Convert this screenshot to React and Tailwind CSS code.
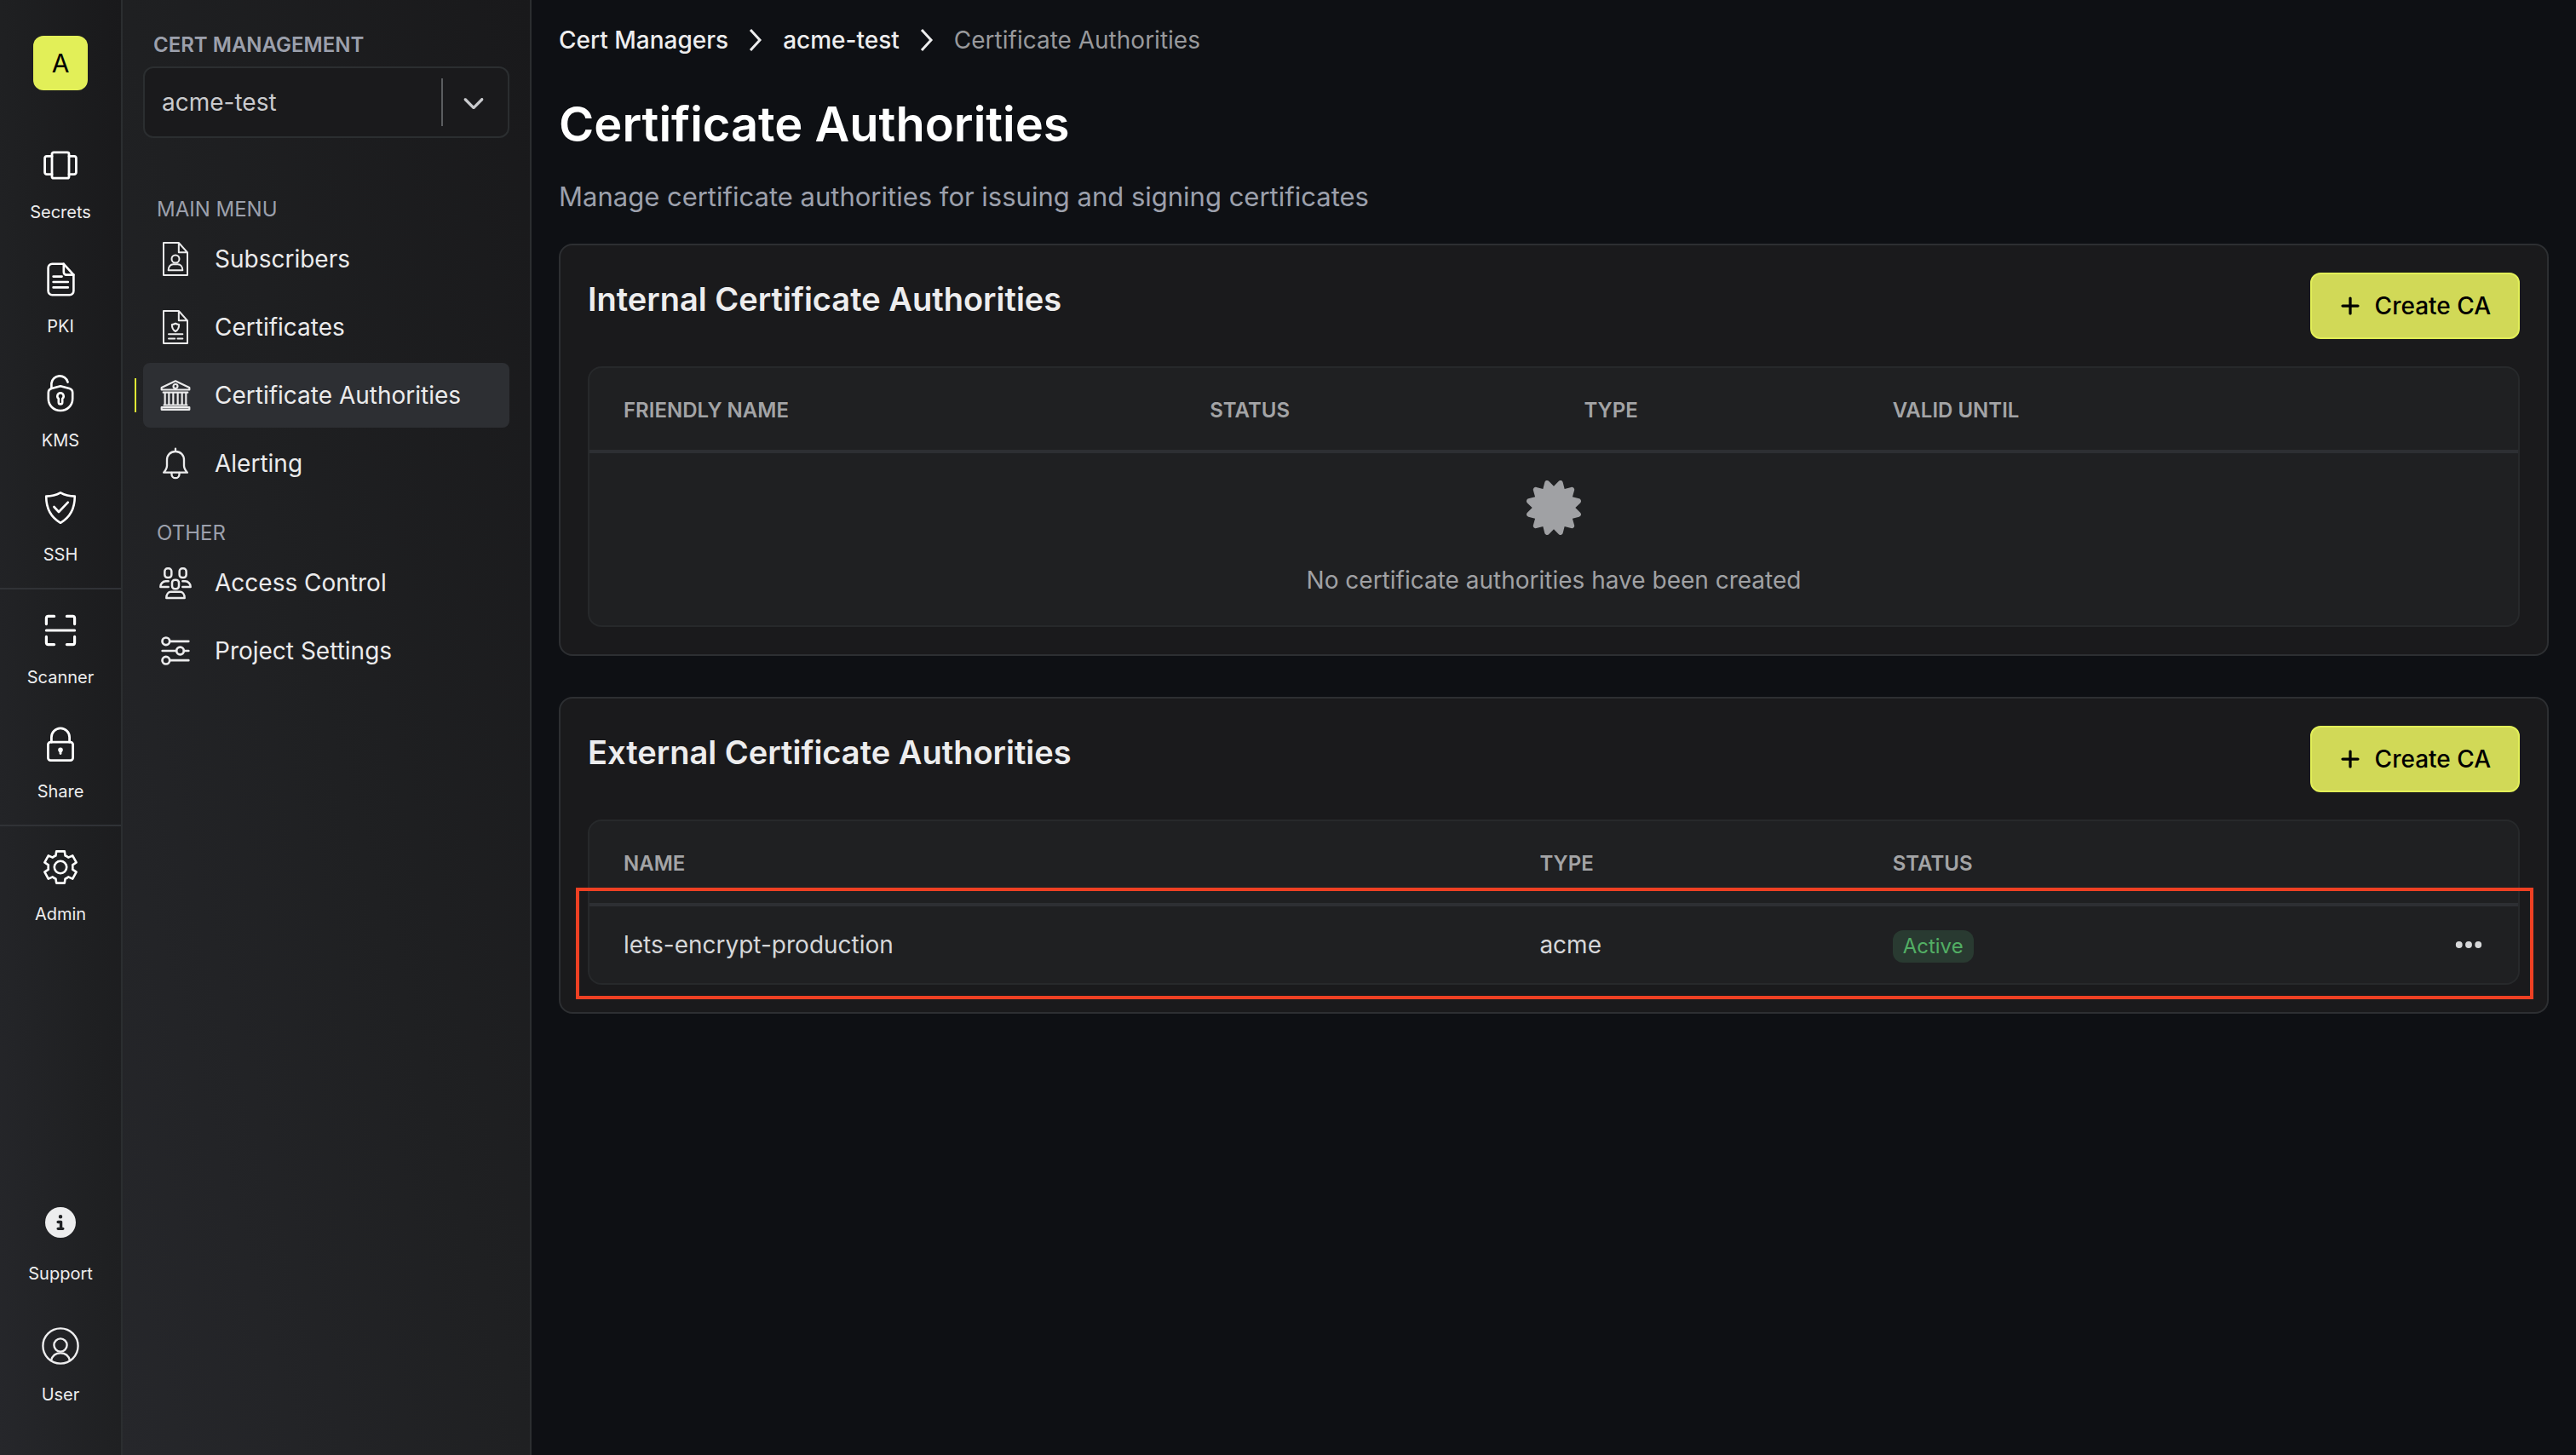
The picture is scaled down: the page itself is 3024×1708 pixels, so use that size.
import React, { useState } from "react";
import { FaChevronDown, FaCertificate, FaCircleInfo, FaEllipsis, FaPlus } from "react-icons/fa6";

// outline icons, all drawn on a 24px grid
function Icon({ name, className }) {
  const { width, shape } = ICONS[name];
  return (
    <svg
      viewBox="0 0 24 24"
      fill="none"
      stroke="currentColor"
      strokeWidth={width}
      strokeLinecap="round"
      strokeLinejoin="round"
      aria-hidden="true"
      className={className}
    >
      {shape}
    </svg>
  );
}

const ICONS = {
  secrets: {
    width: 1.4,
    shape: (
      <>
        <rect x="7" y="4.4" width="10" height="15.200" rx="1" />
        <path d="M7 6.700H4a1.200 1.200 0 0 0-1.200 1.200v8.200A1.200 1.200 0 0 0 4 17.300h3M17 6.700h3a1.200 1.200 0 0 1 1.200 1.200v8.200a1.200 1.200 0 0 1-1.200 1.200h-3" />
      </>
    ),
  },
  pki: {
    width: 1.3,
    shape: (
      <>
        <path d="M13.900 2.900H7.100a2.300 2.300 0 0 0-2.300 2.300v13.600a2.300 2.300 0 0 0 2.300 2.300h10.300a2.300 2.300 0 0 0 2.300-2.300V9.300z" />
        <path d="M13.900 2.900v4.900a1.500 1.500 0 0 0 1.500 1.500h4.300M7.800 10.300h5M7.800 13.500h8.600M7.800 16.700h8.600" />
      </>
    ),
  },
  kms: {
    width: 1.3,
    shape: (
      <>
        <path d="M12 7.600l5.200 1.400c1.200.4 1.900 1.200 1.900 2.500v3.500c0 4-3.100 7-7.100 7s-7.100-3-7.100-7v-3.500c0-1.300.7-2.100 1.900-2.500z" />
        <path d="M6.700 9V6a4.900 4.900 0 0 1 9.600-.7" />
        <path d="M12 11.600a1.900 1.900 0 0 0-1.100 3.400v2.100a1.100 1.100 0 0 0 2.200 0V15a1.900 1.900 0 0 0-1.100-3.400z" />
      </>
    ),
  },
  ssh: {
    width: 1.3,
    shape: (
      <>
        <path d="M12 3.200c2.500 1.400 5.200 2.100 8.400 2.100 0 7-2.400 12.200-8.400 15.600C6 17.500 3.600 12.300 3.600 5.300c3.200 0 5.900-.7 8.400-2.100z" />
        <path d="M8.200 11.500l2.800 3 5.400-5.700" />
      </>
    ),
  },
  scanner: {
    width: 1.6,
    shape: (
      <path d="M3.700 8.300V4.700a1 1 0 0 1 1-1H8.300M15.700 3.700h3.600a1 1 0 0 1 1 1v3.600M3.700 15.700v3.600a1 1 0 0 0 1 1h3.600M15.700 20.300h3.600a1 1 0 0 0 1-1v-3.600M3.700 12h16.600" />
    ),
  },
  share: {
    width: 1.4,
    shape: (
      <>
        <rect x="4.700" y="10.600" width="14.600" height="10.700" rx="1.500" />
        <path d="M6.700 10.600V7.700a5.300 5.300 0 0 1 10.600 0v2.900" />
        <circle cx="12" cy="15.100" r=".7" fill="currentColor" />
        <path d="M12 15.300v2" />
      </>
    ),
  },
  admin: {
    width: 1.3,
    shape: (
      <>
        <path d="M9.600 2.700h4.800l.4 2.600c.7.200 1.200.5 1.800 1l2.500-1.100 2.200 4-2.200 1.500c.1.900.1 1.700 0 2.600l2.200 1.500-2.200 4-2.500-1.100c-.6.500-1.100.8-1.800 1l-.4 2.600H9.600l-.4-2.600c-.7-.2-1.200-.5-1.800-1l-2.500 1.100-2.200-4 2.200-1.500c-.1-.9-.1-1.700 0-2.600L2.700 9.200l2.200-4 2.500 1.100c.6-.5 1.100-.8 1.800-1z" />
        <circle cx="12" cy="12" r="3.600" />
      </>
    ),
  },
  user: {
    width: 1.2,
    shape: (
      <>
        <circle cx="12" cy="12" r="10.300" />
        <circle cx="12" cy="11.500" r="3.800" />
        <path d="M6.500 20.500c.7-2.700 2.800-4.300 5.500-4.300s4.800 1.600 5.500 4.300" />
      </>
    ),
  },
  subscribers: {
    width: 1.2,
    shape: (
      <>
        <path d="M14.300.6H3.600v22.800h16.800V7.400zM14.300.6v6.800h6.100" />
        <circle cx="12" cy="12" r="2.700" />
        <path d="M7 20c0-2.600 1.500-4.300 3.400-4.300h3.200c1.900 0 3.400 1.700 3.400 4.300z" />
      </>
    ),
  },
  certificates: {
    width: 1.2,
    shape: (
      <>
        <path d="M14.300.6H3.600v22.800h16.800V7.400zM14.300.6v6.800h6.100" />
        <path d="M12 9.400c.8.600 1.600.8 2.500.8 0 2.200-.6 3.800-2.500 4.800-1.900-1-2.500-2.600-2.500-4.800.9 0 1.700-.2 2.500-.8zM7.200 17h9.800M7.200 20.100h4.300M13.500 20.100H17" />
      </>
    ),
  },
  authorities: {
    width: 1.3,
    shape: (
      <>
        <path d="M12 2L2.200 6.600v1.500h19.600V6.600zM2.200 22.100v-1.600h19.600v1.600zM3.400 10h17.200M3.900 18.900h16.200M4.600 10v8.900M7.400 10v8.900M10.400 10v8.900M13.600 10v8.900M16.600 10v8.900M19.400 10v8.900" />
        <circle cx="12" cy="5.700" r="1.500" />
      </>
    ),
  },
  alerting: {
    width: 1.4,
    shape: (
      <>
        <path d="M12 1.600v2M12 3.600c-3.700 0-6 2.600-6 6v4c0 1.800-.8 3-2.300 4.800h16.600c-1.500-1.800-2.300-3-2.300-4.800v-4c0-3.400-2.300-6-6-6z" />
        <path d="M9.300 18.500v1.100a2.700 2.700 0 0 0 5.400 0v-1.100" />
      </>
    ),
  },
  access: {
    width: 1.5,
    shape: (
      <>
        <rect x="4.400" y="2" width="4.800" height="6.400" rx="2" />
        <rect x="14.800" y="2" width="4.800" height="6.400" rx="2" />
        <rect x="9.600" y="10" width="4.800" height="6.400" rx="2" />
        <path d="M7 11H5.200a3.800 3.800 0 0 0-3.800 4H7M17 11h1.800a3.800 3.800 0 0 1 3.800 4H17M5.600 22.800c0-2.700 1.400-4.300 3.200-4.300h6.400c1.800 0 3.200 1.600 3.200 4.300z" />
      </>
    ),
  },
  settings: {
    width: 1.6,
    shape: (
      <>
        <circle cx="5.300" cy="5.300" r="2.600" />
        <circle cx="15.300" cy="12" r="2.600" />
        <circle cx="5.300" cy="18.700" r="2.600" />
        <path d="M8 5.300h13.200M2.800 12h9.800M18 12h3.200M8 18.700h13.200" />
      </>
    ),
  },
};

const railGroups = [
  [
    { icon: "secrets", label: "Secrets" },
    { icon: "pki", label: "PKI" },
    { icon: "kms", label: "KMS" },
    { icon: "ssh", label: "SSH" },
  ],
  [
    { icon: "scanner", label: "Scanner" },
    { icon: "share", label: "Share" },
  ],
  [{ icon: "admin", label: "Admin" }],
];

const menus = [
  {
    title: "Main Menu",
    items: [
      { icon: "subscribers", label: "Subscribers" },
      { icon: "certificates", label: "Certificates" },
      { icon: "authorities", label: "Certificate Authorities" },
      { icon: "alerting", label: "Alerting" },
    ],
  },
  {
    title: "Other",
    items: [
      { icon: "access", label: "Access Control" },
      { icon: "settings", label: "Project Settings" },
    ],
  },
];

function RailItem({ icon, label }) {
  return (
    <a href="#" className="flex h-[134px] flex-col items-center pt-6 text-xl text-[#ededee]">
      <Icon name={icon} className="size-12 text-white" />
      <span className="mt-[17px]">{label}</span>
    </a>
  );
}

function Rail() {
  return (
    <nav
      aria-label="Products"
      className="flex w-36 shrink-0 flex-col border-r-2 border-[#2b2e30] bg-linear-to-tr from-[#26272b] via-[#1f2022] to-[#19191b]"
    >
      <div className="flex h-[146px] items-start justify-center pt-[42px]">
        <div className="flex size-16 items-center justify-center rounded-xl bg-[#e2ef58] text-3xl text-black">
          A
        </div>
      </div>
      {railGroups.map((group, index) => (
        <div
          key={group[0].label}
          className={index < railGroups.length - 1 ? "border-b-2 border-[#303236] pb-2" : ""}
        >
          {group.map((item) => (
            <RailItem key={item.label} {...item} />
          ))}
        </div>
      ))}
      <div className="mt-auto flex flex-col pb-[42px] text-xl text-[#ededee]">
        <button type="button" className="flex h-[145px] flex-col items-center pt-[30px]">
          <FaCircleInfo className="size-9" />
          <span className="mt-7">Support</span>
        </button>
        <button type="button" className="flex h-[134px] flex-col items-center pt-6">
          <Icon name="user" className="size-12" />
          <span className="mt-[19px]">User</span>
        </button>
      </div>
    </nav>
  );
}

function Sidebar() {
  const [active, setActive] = useState("Certificate Authorities");

  return (
    <aside className="w-[480px] shrink-0 border-r-2 border-[#2b2e30] bg-linear-to-tr from-[#26272b] via-[#1f2022] to-[#19191b] px-6 pt-[37px]">
      <label
        htmlFor="project"
        className="block pl-3 text-2xl/8 font-semibold text-[#9ca0ac] uppercase"
      >
        Cert Management
      </label>
      <div className="relative mt-[9px] h-[84px] rounded-xl border-2 border-[#2b2e30] bg-[#1a1a1c]">
        <select
          id="project"
          className="size-full appearance-none bg-transparent pl-5 text-[28px] text-[#c9cacd] outline-none"
        >
          <option>acme-test</option>
        </select>
        <div className="pointer-events-none absolute inset-y-3 right-0 flex w-[78px] items-center justify-center border-l-2 border-[#5b5d60] pr-1 text-[#c9cacd]">
          <FaChevronDown className="size-[26px]" />
        </div>
      </div>
      {menus.map((menu, index) => (
        <nav
          key={menu.title}
          aria-label={menu.title}
          className={index === 0 ? "pt-[68px]" : "pt-7"}
        >
          <h2 className="pl-4 text-2xl/8 text-[#9ca0ac] uppercase">{menu.title}</h2>
          <ul className="-ml-3 flex flex-col gap-1 pt-1">
            {menu.items.map((item) => (
              <li key={item.label} className="flex items-center">
                <span
                  className={`mr-2 ml-[2px] h-10 w-[2px] ${
                    active === item.label ? "bg-[#e0ed34]" : ""
                  }`}
                />
                <a
                  href="#"
                  onClick={() => setActive(item.label)}
                  className={`flex h-[76px] grow items-center gap-[26px] rounded-lg pl-[18px] text-[28px] text-[#ebebec] ${
                    active === item.label ? "bg-[#2d2f33]" : ""
                  }`}
                >
                  <Icon name={item.icon} className="size-10" />
                  {item.label}
                </a>
              </li>
            ))}
          </ul>
        </nav>
      ))}
    </aside>
  );
}

function Crumb() {
  return (
    <svg
      viewBox="0 0 16 26"
      fill="none"
      stroke="currentColor"
      strokeWidth="3"
      aria-hidden="true"
      className="mx-6 h-[26px] w-4"
    >
      <path d="M2 1l11 12L2 25" />
    </svg>
  );
}

function Section({ title, children }) {
  return (
    <section className="rounded-2xl border-2 border-[#2d2f32] bg-[#1a1a1c] p-8">
      <div className="mb-8 flex items-start justify-between">
        <h2 className="pt-2 text-[38px]/[46px] font-semibold text-[#ededee]">{title}</h2>
        <button
          type="button"
          className="flex h-[78px] items-center gap-4 rounded-xl border-2 border-[#e2ef58] bg-[#d1d957] px-8 text-[28px] font-medium text-black"
        >
          <FaPlus className="size-[26px]" />
          Create CA
        </button>
      </div>
      {children}
    </section>
  );
}

function Table({ columns, children }) {
  return (
    <div className="overflow-hidden rounded-2xl border-2 border-[#27292b] bg-[#1f2022]">
      <table className="w-full table-fixed text-left">
        <thead>
          <tr className="h-[98px] border-b-4 border-[#2d2f33]">
            {columns.map(({ label, width }) => (
              <th
                key={label}
                className={`px-10 pt-1 text-2xl font-semibold text-[#a3a4a6] uppercase ${width}`}
              >
                {label}
              </th>
            ))}
          </tr>
        </thead>
        <tbody>{children}</tbody>
      </table>
    </div>
  );
}

const internalColumns = [
  { label: "Friendly Name", width: "w-[30.4%]" },
  { label: "Status", width: "w-[19.4%]" },
  { label: "Type", width: "w-[16%]" },
  { label: "Valid Until", width: "" },
];

const externalColumns = [
  { label: "Name", width: "w-[47.5%]" },
  { label: "Type", width: "w-[18.3%]" },
  { label: "Status", width: "w-[20%]" },
  { label: "", width: "" },
];

export default function App() {
  return (
    <div className="flex min-h-screen bg-[#0e1014] font-[Inter,sans-serif]">
      <Rail />
      <Sidebar />
      <main className="min-w-0 grow px-8 pt-7">
        <nav
          aria-label="Breadcrumb"
          className="flex items-center text-[28px]/[38px] font-medium text-[#ededee]"
        >
          <a href="#">Cert Managers</a>
          <Crumb />
          <a href="#">acme-test</a>
          <Crumb />
          <span className="font-normal text-[#98999c]">Certificate Authorities</span>
        </nav>
        <h1 className="mt-11 text-[56px]/[72px] font-semibold text-white">
          Certificate Authorities
        </h1>
        <p className="mt-[29px] text-[31px]/[40px] text-[#9ca0ac]">
          Manage certificate authorities for issuing and signing certificates
        </p>
        <div className="mt-[35px] flex flex-col gap-12">
          <Section title="Internal Certificate Authorities">
            <Table columns={internalColumns}>
              <tr>
                <td colSpan={4} className="h-[204px] pt-8 align-top text-[28px] text-[#a0a1a4]">
                  <div className="flex flex-col items-center gap-8">
                    <FaCertificate className="size-16" />
                    <p>No certificate authorities have been created</p>
                  </div>
                </td>
              </tr>
            </Table>
          </Section>
          <Section title="External Certificate Authorities">
            <div className="relative">
              <Table columns={externalColumns}>
                <tr className="h-[92px] text-[28px] text-[#d6d7d9]">
                  <td className="px-10">lets-encrypt-production</td>
                  <td className="px-10">acme</td>
                  <td className="px-10 pt-1">
                    <span className="flex h-[38px] w-fit items-center rounded-xl bg-[#293a31] px-3 text-2xl text-[#52ae64]">
                      Active
                    </span>
                  </td>
                  <td className="px-10">
                    <button type="button" aria-label="More options" className="ml-auto block">
                      <FaEllipsis className="size-9" />
                    </button>
                  </td>
                </tr>
              </Table>
              {/* highlight around the row */}
              <div className="pointer-events-none absolute top-20 -right-4 -bottom-[17px] -left-[14px] border-4 border-[#ee4023]" />
            </div>
          </Section>
        </div>
      </main>
    </div>
  );
}
